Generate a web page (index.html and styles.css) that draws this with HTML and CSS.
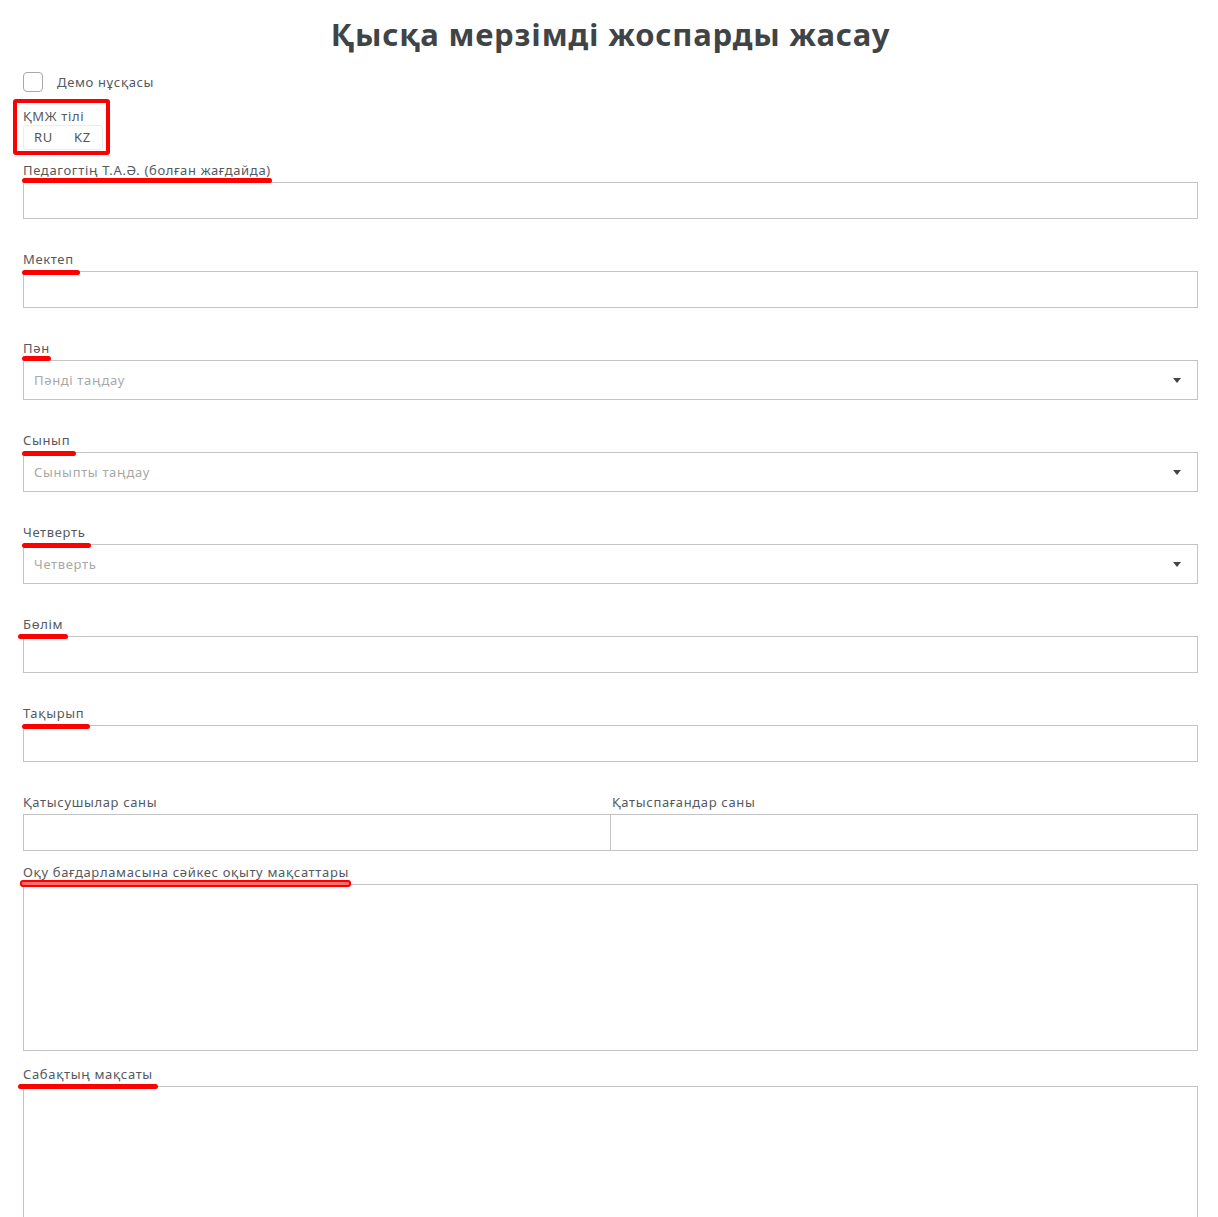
FILE: index.html
```html
<!DOCTYPE html>
<html lang="kk">
<head>
    <meta charset="UTF-8">
    <title>Қысқа мерзімді жоспарды жасау</title>
    <link rel="stylesheet" href="styles.css">
</head>
<body>
    <div class="page">
        <h1 class="title">Қысқа мерзімді жоспарды жасау</h1>

        <label class="demo">
            <span class="check"></span>
            <span class="demo-text">Демо нұсқасы</span>
        </label>

        <div class="lang">
            <div class="lang-label">ҚМЖ тілі</div>
            <div class="lang-btns">
                <span class="lang-btn">RU</span>
                <span class="lang-btn">KZ</span>
            </div>
        </div>

        <div class="field">
            <div class="label"><span class="mark">Педагогтің Т.А.Ә. (болған жағдайда)</span></div>
            <div class="input"></div>
        </div>

        <div class="field">
            <div class="label"><span class="mark mark-wide">Мектеп</span></div>
            <div class="input"></div>
        </div>

        <div class="field">
            <div class="label"><span class="mark">Пән</span></div>
            <div class="select">Пәнді таңдау</div>
        </div>

        <div class="field">
            <div class="label"><span class="mark mark-wide">Сынып</span></div>
            <div class="select">Сыныпты таңдау</div>
        </div>

        <div class="field">
            <div class="label"><span class="mark mark-wide">Четверть</span></div>
            <div class="select">Четверть</div>
        </div>

        <div class="field">
            <div class="label"><span class="mark mark-left">Бөлім</span></div>
            <div class="input"></div>
        </div>

        <div class="field">
            <div class="label"><span class="mark mark-wide">Тақырып</span></div>
            <div class="input"></div>
        </div>

        <div class="field field-tight">
            <div class="pair">
                <div>
                    <div class="label">Қатысушылар саны</div>
                    <div class="input"></div>
                </div>
                <div>
                    <div class="label label-right">Қатыспағандар саны</div>
                    <div class="input input-right"></div>
                </div>
            </div>
        </div>

        <div class="field field-area">
            <div class="label"><span class="mark mark-box">Оқу бағдарламасына сәйкес оқыту мақсаттары</span></div>
            <div class="textarea"></div>
        </div>

        <div class="field">
            <div class="label"><span class="mark mark-left">Сабақтың мақсаты</span></div>
            <div class="textarea"></div>
        </div>
    </div>
</body>
</html>
```

FILE: styles.css
```css
*, *::before, *::after {
    padding: 0;
    margin: 0;
    box-sizing: border-box;
}
body {
    font-family: "Noto Sans", "Open Sans", sans-serif;
    font-size: 13px;
    letter-spacing: 0.65px;
    color: #55595e;
    background-color: #fff;
}
.page {
    padding: 0 20px 0 23px;
}
.title {
    padding-top: 14px;
    line-height: 40px;
    font-size: 31px;
    font-weight: 700;
    letter-spacing: 0.8px;
    text-align: center;
    color: #3f4447;
}
.demo {
    display: flex;
    align-items: center;
    margin-top: 18px;
    height: 20px;
}
.check {
    width: 20px;
    height: 20px;
    border: 1px solid #a9a9a9;
    border-radius: 4px;
}
.demo-text {
    margin-left: 14px;
}
.lang {
    position: relative;
    margin-top: 16px;
    width: 80px;
}
/* red annotation frame */
.lang::before {
    content: "";
    position: absolute;
    left: -10px;
    top: -9px;
    width: 97px;
    height: 56px;
    border: 4px solid #f00;
    border-radius: 3px;
}
.lang-label {
    line-height: 16px;
}
.lang-btns {
    display: flex;
    margin-top: 1px;
    height: 25px;
    border: 1px solid #ececec;
    border-radius: 3px;
}
.lang-btn {
    flex: 1;
    line-height: 23px;
    text-align: center;
    color: #555;
}
.field {
    margin-top: 12px;
}
.field + .field {
    margin-top: 32px;
}
.field-tight + .field {
    margin-top: 13px;
}
.field-area + .field {
    margin-top: 15px;
}
.label {
    line-height: 16px;
    margin-bottom: 4px;
}
.label-right {
    padding-left: 1px;
}
.mark {
    position: relative;
    z-index: 1;
    display: inline-block;
}
/* red underline annotation */
.mark::after {
    content: "";
    position: absolute;
    left: -1px;
    right: -1px;
    top: 16px;
    height: 5px;
    border-radius: 3px;
    background-color: #f00;
}
.mark-wide::after {
    top: 19px;
    right: -6px;
}
.mark-left::after {
    left: -5px;
    right: -5px;
    top: 18px;
}
.mark-box::after {
    left: -3px;
    right: -2px;
    top: 16px;
    height: 7px;
    background-color: #ff6b6b;
    border: 2px solid #f00;
}
.input {
    height: 37px;
    border: 1px solid #c4c4c4;
}
.select {
    position: relative;
    height: 40px;
    line-height: 38px;
    padding-left: 10px;
    border: 1px solid #c4c4c4;
    color: #a8a8a8;
}
.select::after {
    content: "";
    position: absolute;
    right: 16px;
    top: 17px;
    border-left: 4px solid transparent;
    border-right: 4px solid transparent;
    border-top: 5px solid #444;
}
.pair {
    display: grid;
    grid-template-columns: 588px 1fr;
}
.input-right {
    border-left: none;
}
.textarea {
    height: 167px;
    border: 1px solid #c4c4c4;
}
```
